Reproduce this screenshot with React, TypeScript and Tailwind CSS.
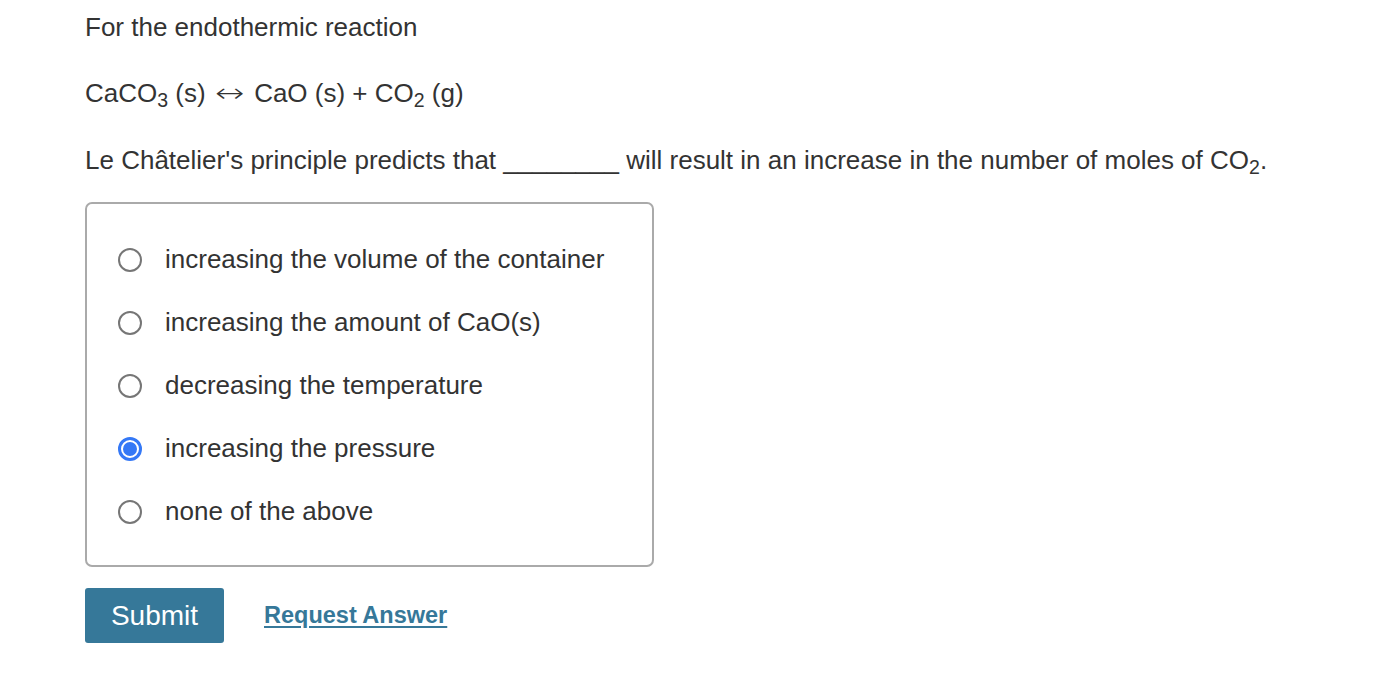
import React, { useState } from "react";

const options = [
  "increasing the volume of the container",
  "increasing the amount of CaO(s)",
  "decreasing the temperature",
  "increasing the pressure",
  "none of the above",
];

function Radio({ checked }: { checked: boolean }) {
  return checked ? (
    <span className="w-[24px] h-[24px] rounded-full border-[3px] border-[#3478f6] flex items-center justify-center shrink-0">
      <span className="w-[14px] h-[14px] rounded-full bg-[#3478f6]" />
    </span>
  ) : (
    <span className="w-[24px] h-[24px] rounded-full border-[2px] border-[#767676] shrink-0" />
  );
}

export default function App() {
  const [selected, setSelected] = useState(3);

  return (
    <div className="min-h-screen bg-white text-[#333333] font-['Liberation_Sans',Arial,sans-serif] text-[26px] px-[85px] pt-[11px]">
      <p className="leading-[32px]">For the endothermic reaction</p>
      <p className="leading-[32px] mt-[34px]">
        CaCO<sub>3</sub> (s){" "}
        <span className="inline-block w-[34px] text-center font-['DejaVu_Sans',sans-serif] text-[26px] font-light scale-x-[1.35]">↔</span>{" "}
        CaO (s) + CO<sub>2</sub> (g)
      </p>
      <p className="leading-[32px] mt-[35px]">
        Le Châtelier's principle predicts that ________ will result in an increase in the number of moles of CO<sub>2</sub>.
      </p>

      {/* Answer choices */}
      <div className="mt-[26px] w-[569px] border-2 border-[#aaaaaa] rounded-[7px] pt-[24px] pb-[22px] pl-[31px]">
        {options.map((opt, i) => (
          <label
            key={opt}
            onClick={() => setSelected(i)}
            className="h-[63px] flex items-center gap-[23px] cursor-pointer"
          >
            <Radio checked={selected === i} />
            <span>{opt}</span>
          </label>
        ))}
      </div>

      <div className="mt-[21px] flex items-center gap-[40px]">
        <button className="w-[139px] h-[55px] bg-[#367899] text-white text-[28px] rounded-[3px]">
          Submit
        </button>
        <a href="#" className="text-[#367899] font-bold text-[23.5px] underline underline-offset-[3px]">
          Request Answer
        </a>
      </div>
    </div>
  );
}
